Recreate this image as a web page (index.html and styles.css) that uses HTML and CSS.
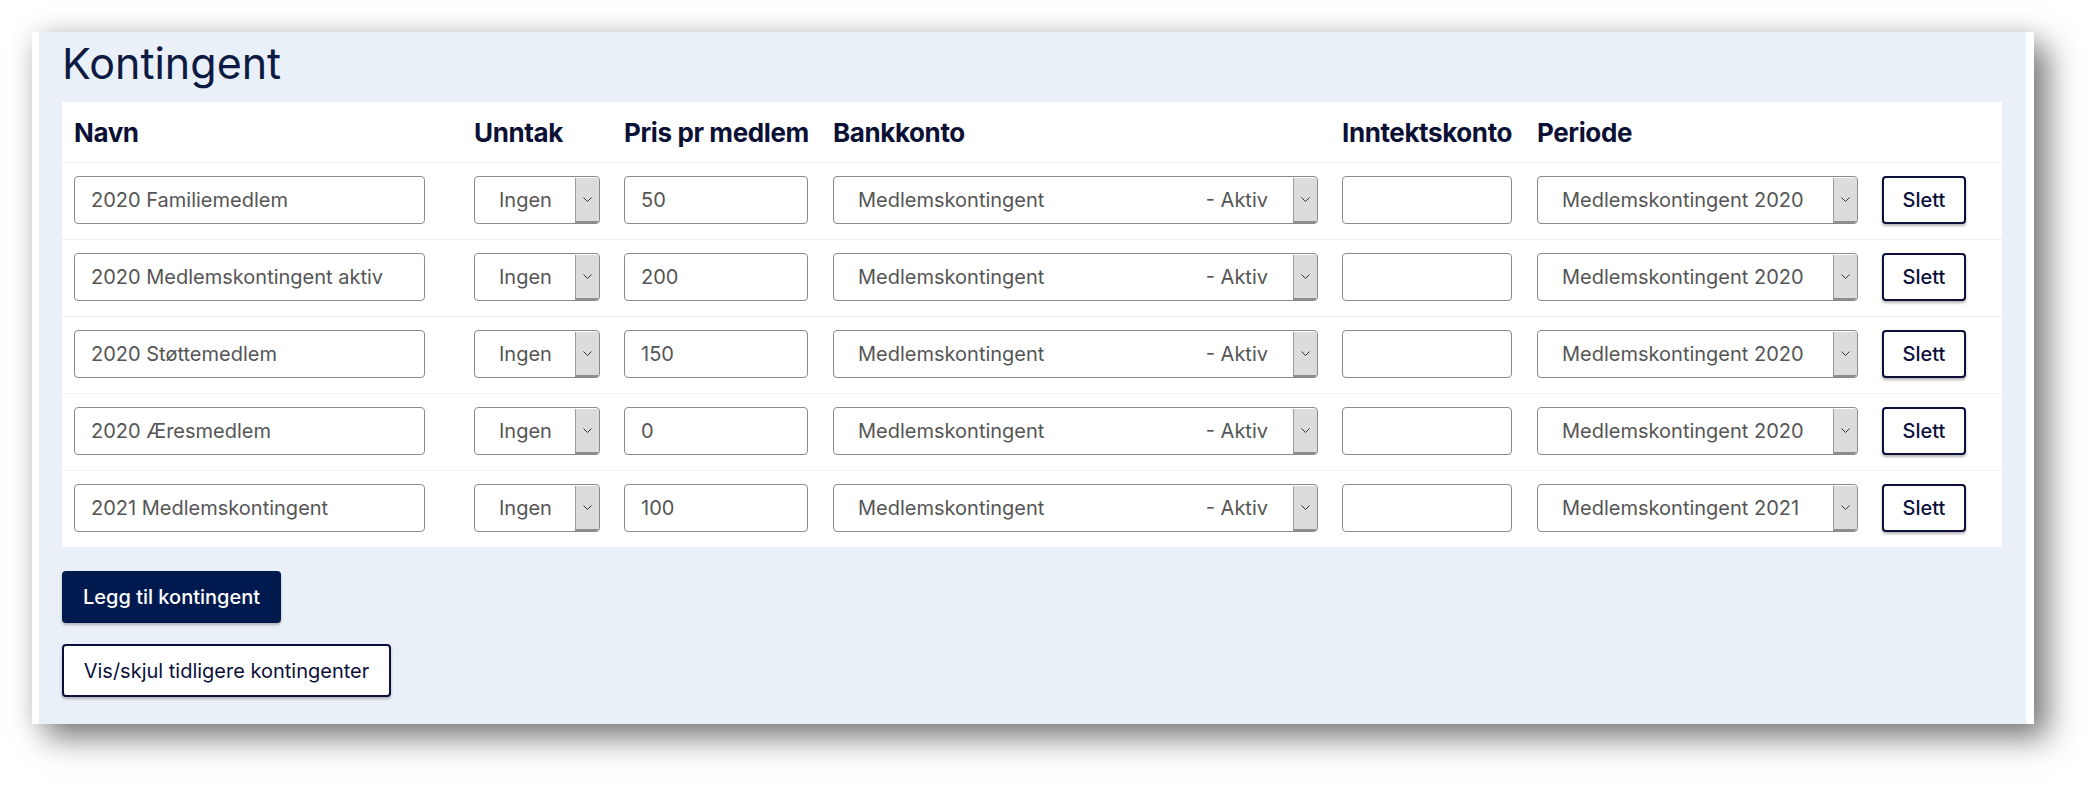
FILE: index.html
```html
<!DOCTYPE html>
<html lang="no">
<head>
    <meta charset="UTF-8">
    <meta name="viewport" content="width=device-width, initial-scale=1.0">
    <title>Kontingent</title>
    <link rel="stylesheet" href="styles.css">
</head>
<body>
    <div class="shot">
        <div class="page">
            <h1>Kontingent</h1>

            <table class="fees">
                <colgroup>
                    <col class="c-name">
                    <col class="c-exc">
                    <col class="c-price">
                    <col class="c-bank">
                    <col class="c-income">
                    <col class="c-period">
                    <col class="c-del">
                </colgroup>
                <thead>
                    <tr>
                        <th>Navn</th>
                        <th>Unntak</th>
                        <th>Pris pr medlem</th>
                        <th>Bankkonto</th>
                        <th>Inntektskonto</th>
                        <th>Periode</th>
                        <th></th>
                    </tr>
                </thead>
                <tbody>
                    <tr>
                        <td><input type="text" class="field name" value="2020 Familiemedlem"></td>
                        <td><div class="select exc"><span>Ingen</span><i class="arrow"><svg width="9" height="5" viewBox="0 0 9 5"><polyline points="0.5,0.5 4.5,4.5 8.5,0.5" fill="none" stroke="#333" stroke-width="1"/></svg></i></div></td>
                        <td><input type="text" class="field price" value="50"></td>
                        <td><div class="select bank"><span>Medlemskontingent</span><span class="tail">- Aktiv</span><i class="arrow"><svg width="9" height="5" viewBox="0 0 9 5"><polyline points="0.5,0.5 4.5,4.5 8.5,0.5" fill="none" stroke="#333" stroke-width="1"/></svg></i></div></td>
                        <td><input type="text" class="field income" value=""></td>
                        <td><div class="select period"><span>Medlemskontingent 2020</span><i class="arrow"><svg width="9" height="5" viewBox="0 0 9 5"><polyline points="0.5,0.5 4.5,4.5 8.5,0.5" fill="none" stroke="#333" stroke-width="1"/></svg></i></div></td>
                        <td><button class="btn-del">Slett</button></td>
                    </tr>
                    <tr>
                        <td><input type="text" class="field name" value="2020 Medlemskontingent aktiv"></td>
                        <td><div class="select exc"><span>Ingen</span><i class="arrow"><svg width="9" height="5" viewBox="0 0 9 5"><polyline points="0.5,0.5 4.5,4.5 8.5,0.5" fill="none" stroke="#333" stroke-width="1"/></svg></i></div></td>
                        <td><input type="text" class="field price" value="200"></td>
                        <td><div class="select bank"><span>Medlemskontingent</span><span class="tail">- Aktiv</span><i class="arrow"><svg width="9" height="5" viewBox="0 0 9 5"><polyline points="0.5,0.5 4.5,4.5 8.5,0.5" fill="none" stroke="#333" stroke-width="1"/></svg></i></div></td>
                        <td><input type="text" class="field income" value=""></td>
                        <td><div class="select period"><span>Medlemskontingent 2020</span><i class="arrow"><svg width="9" height="5" viewBox="0 0 9 5"><polyline points="0.5,0.5 4.5,4.5 8.5,0.5" fill="none" stroke="#333" stroke-width="1"/></svg></i></div></td>
                        <td><button class="btn-del">Slett</button></td>
                    </tr>
                    <tr>
                        <td><input type="text" class="field name" value="2020 Støttemedlem"></td>
                        <td><div class="select exc"><span>Ingen</span><i class="arrow"><svg width="9" height="5" viewBox="0 0 9 5"><polyline points="0.5,0.5 4.5,4.5 8.5,0.5" fill="none" stroke="#333" stroke-width="1"/></svg></i></div></td>
                        <td><input type="text" class="field price" value="150"></td>
                        <td><div class="select bank"><span>Medlemskontingent</span><span class="tail">- Aktiv</span><i class="arrow"><svg width="9" height="5" viewBox="0 0 9 5"><polyline points="0.5,0.5 4.5,4.5 8.5,0.5" fill="none" stroke="#333" stroke-width="1"/></svg></i></div></td>
                        <td><input type="text" class="field income" value=""></td>
                        <td><div class="select period"><span>Medlemskontingent 2020</span><i class="arrow"><svg width="9" height="5" viewBox="0 0 9 5"><polyline points="0.5,0.5 4.5,4.5 8.5,0.5" fill="none" stroke="#333" stroke-width="1"/></svg></i></div></td>
                        <td><button class="btn-del">Slett</button></td>
                    </tr>
                    <tr>
                        <td><input type="text" class="field name" value="2020 Æresmedlem"></td>
                        <td><div class="select exc"><span>Ingen</span><i class="arrow"><svg width="9" height="5" viewBox="0 0 9 5"><polyline points="0.5,0.5 4.5,4.5 8.5,0.5" fill="none" stroke="#333" stroke-width="1"/></svg></i></div></td>
                        <td><input type="text" class="field price" value="0"></td>
                        <td><div class="select bank"><span>Medlemskontingent</span><span class="tail">- Aktiv</span><i class="arrow"><svg width="9" height="5" viewBox="0 0 9 5"><polyline points="0.5,0.5 4.5,4.5 8.5,0.5" fill="none" stroke="#333" stroke-width="1"/></svg></i></div></td>
                        <td><input type="text" class="field income" value=""></td>
                        <td><div class="select period"><span>Medlemskontingent 2020</span><i class="arrow"><svg width="9" height="5" viewBox="0 0 9 5"><polyline points="0.5,0.5 4.5,4.5 8.5,0.5" fill="none" stroke="#333" stroke-width="1"/></svg></i></div></td>
                        <td><button class="btn-del">Slett</button></td>
                    </tr>
                    <tr>
                        <td><input type="text" class="field name" value="2021 Medlemskontingent"></td>
                        <td><div class="select exc"><span>Ingen</span><i class="arrow"><svg width="9" height="5" viewBox="0 0 9 5"><polyline points="0.5,0.5 4.5,4.5 8.5,0.5" fill="none" stroke="#333" stroke-width="1"/></svg></i></div></td>
                        <td><input type="text" class="field price" value="100"></td>
                        <td><div class="select bank"><span>Medlemskontingent</span><span class="tail">- Aktiv</span><i class="arrow"><svg width="9" height="5" viewBox="0 0 9 5"><polyline points="0.5,0.5 4.5,4.5 8.5,0.5" fill="none" stroke="#333" stroke-width="1"/></svg></i></div></td>
                        <td><input type="text" class="field income" value=""></td>
                        <td><div class="select period"><span>Medlemskontingent 2021</span><i class="arrow"><svg width="9" height="5" viewBox="0 0 9 5"><polyline points="0.5,0.5 4.5,4.5 8.5,0.5" fill="none" stroke="#333" stroke-width="1"/></svg></i></div></td>
                        <td><button class="btn-del">Slett</button></td>
                    </tr>
                </tbody>
            </table>

            <div class="actions">
                <button class="btn-add">Legg til kontingent</button>
                <button class="btn-toggle">Vis/skjul tidligere kontingenter</button>
            </div>
        </div>
    </div>
</body>
</html>
```

FILE: styles.css
```css
body {
    margin: 0;
    background: #ffffff;
    font-family: Inter, "Noto Sans", Arial, sans-serif;
    height: 790px;
    overflow: hidden;
}
.shot {
    margin: 32px 0 0 32px;
    width: 2002px;
    height: 692px;
    box-sizing: border-box;
    background: #e9f0f7;
    border-left: 7px solid #ffffff;
    border-right: 8px solid #ffffff;
    box-shadow: 14px 14px 30px rgba(0,0,0,0.5), 0 0 24px rgba(0,0,0,0.1);
}
.page {
    padding: 5px 25px 0 23px;
}
h1 {
    margin: 0 0 13px 0;
    font-size: 43px;
    font-weight: 400;
    line-height: 52px;
    color: #0d1a42;
}
.fees {
    width: 1940px;
    table-layout: fixed;
    border-collapse: collapse;
    background: #ffffff;
}
.c-name { width: 400px; }
.c-exc { width: 150px; }
.c-price { width: 209px; }
.c-bank { width: 509px; }
.c-income { width: 195px; }
.c-period { width: 345px; }
.c-del { width: 132px; }
th {
    text-align: left;
    font-size: 26px;
    font-weight: 700;
    color: #0b1035;
    padding: 0 12px;
    height: 60px;
    white-space: nowrap;
    letter-spacing: -0.4px;
}
td {
    padding: 13px 12px 15px 12px;
    border-top: 1px solid #eceef1;
    vertical-align: middle;
}
.field {
    display: block;
    height: 48px;
    box-sizing: border-box;
    border: 1px solid #8a8a8a;
    border-radius: 4px;
    padding: 0 16px;
    font-family: Inter, "Noto Sans", Arial, sans-serif;
    font-size: 20px;
    color: #555555;
    background: #ffffff;
}
.name { width: 351px; }
.price { width: 184px; }
.income { width: 170px; }
.select {
    display: flex;
    align-items: center;
    height: 48px;
    box-sizing: border-box;
    border: 1px solid #8a8a8a;
    border-radius: 4px;
    padding-left: 24px;
    font-size: 20px;
    color: #555555;
    background: #ffffff;
    overflow: hidden;
}
.select span {
    white-space: nowrap;
}
.select .tail {
    margin-left: auto;
    margin-right: 25px;
}
.exc { width: 126px; }
.exc span,
.period span { flex: 1; }
.bank { width: 485px; }
.period { width: 321px; }
.arrow {
    display: flex;
    align-items: center;
    justify-content: center;
    width: 24px;
    align-self: stretch;
    box-sizing: border-box;
    background: #dcdcdc;
    border-left: 1px solid #9c9c9c;
    border-bottom: 2px solid #8e8e8e;
    margin-top: 1px;
}
.btn-del {
    display: block;
    width: 84px;
    height: 48px;
    border: 2px solid #0b0f3a;
    border-radius: 4px;
    background: #ffffff;
    color: #0b0f3a;
    font-family: Inter, "Noto Sans", Arial, sans-serif;
    font-size: 20px;
    font-weight: 500;
    box-shadow: 0 2px 3px rgba(0,0,0,0.3);
}
.actions {
    display: flex;
    flex-direction: column;
    align-items: flex-start;
    gap: 21px;
    margin-top: 24px;
}
.btn-add,
.btn-toggle {
    height: 52px;
    padding: 0 18px;
    border-radius: 4px;
    font-family: Inter, "Noto Sans", Arial, sans-serif;
    font-size: 20px;
    white-space: nowrap;
    box-shadow: 0 2px 3px rgba(0,0,0,0.25);
}
.btn-add {
    width: 219px;
    border: none;
    background: #001a4f;
    color: #ffffff;
    font-weight: 500;
}
.btn-toggle {
    width: 329px;
    height: 53px;
    padding: 0 16px;
    border: 2px solid #0b0f3a;
    background: #ffffff;
    color: #0b0f3a;
    font-weight: 400;
}
```
